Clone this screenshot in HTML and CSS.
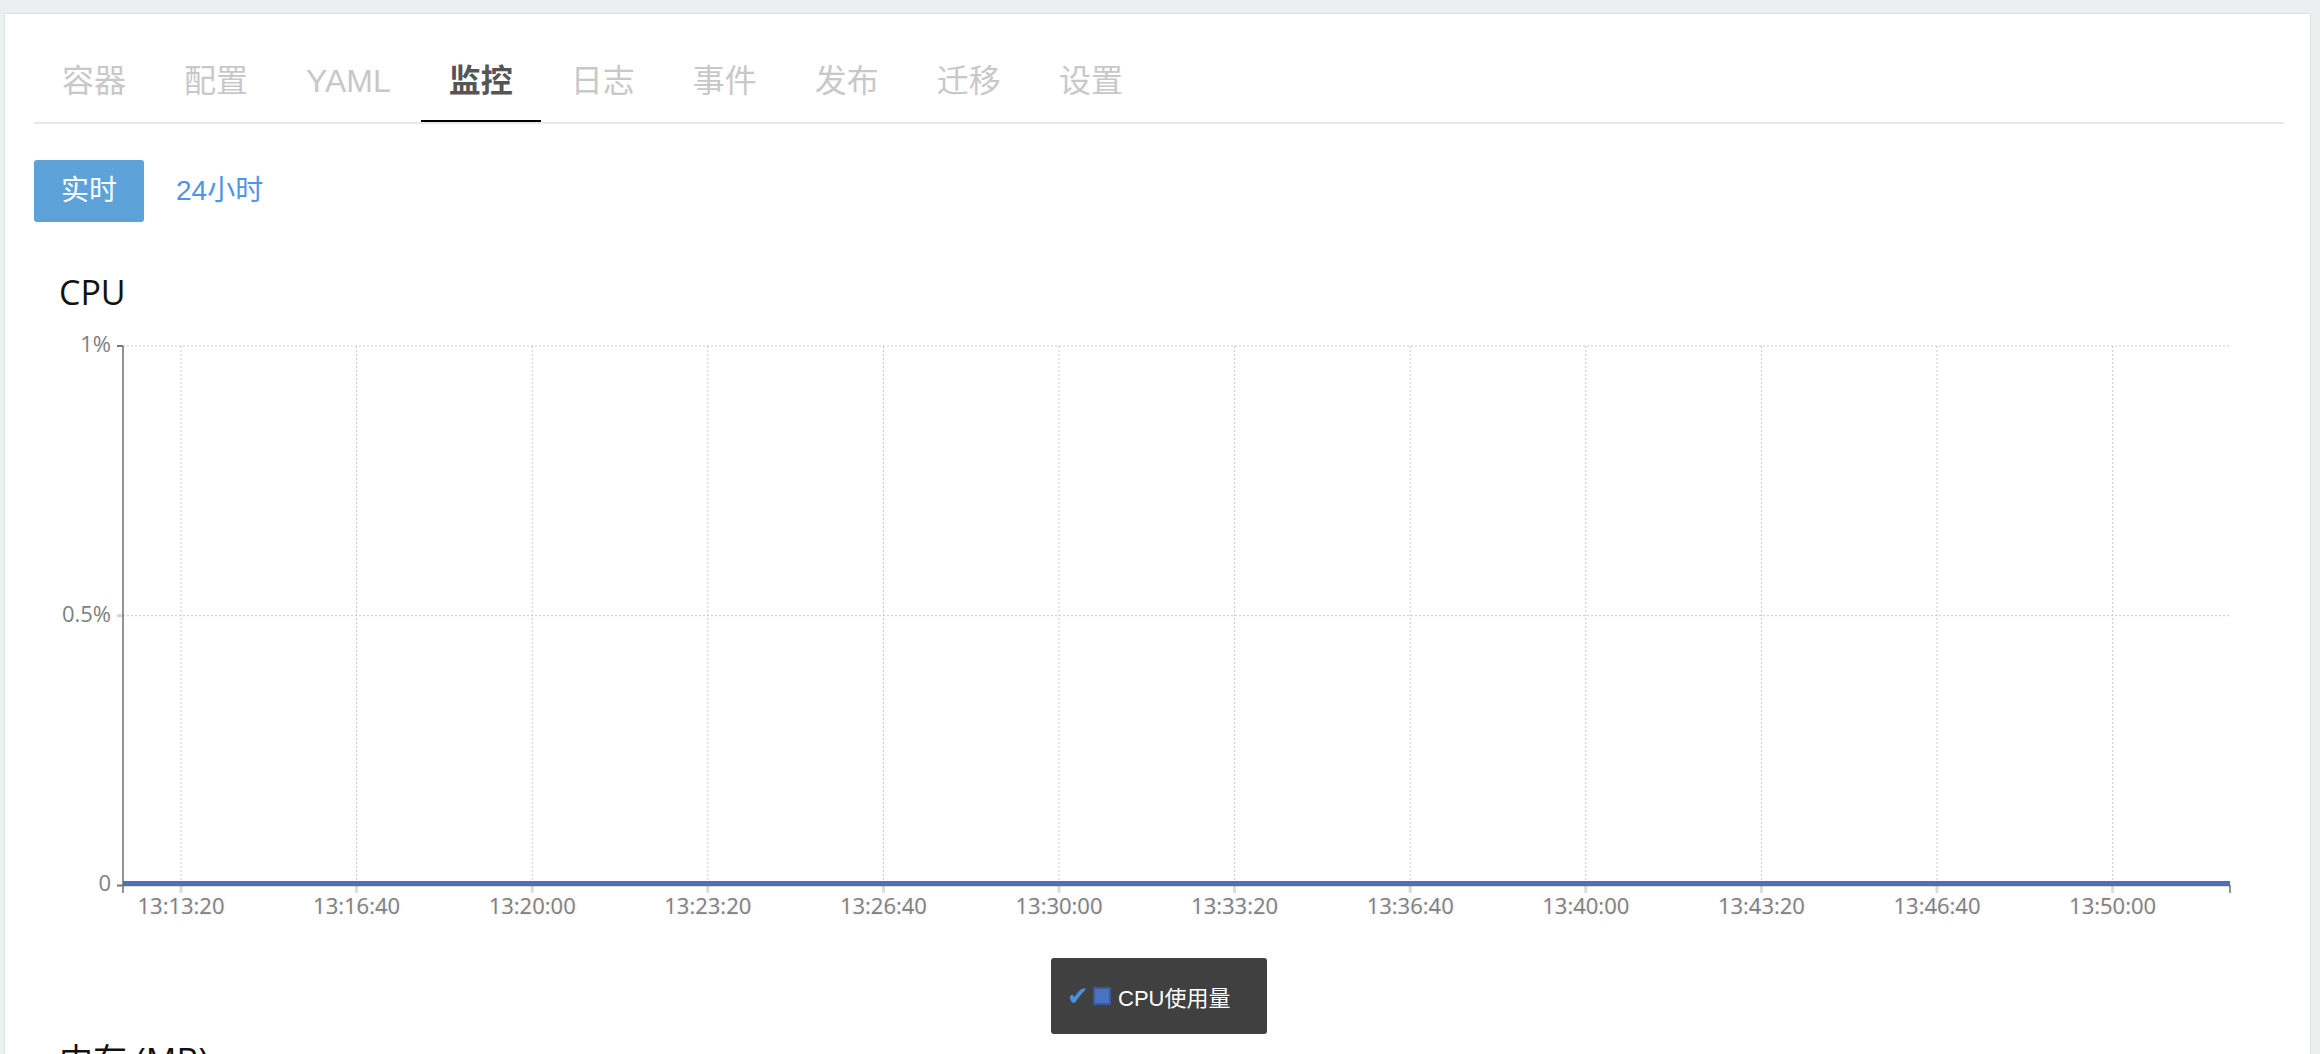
FILE: index.html
```html
<!DOCTYPE html>
<html lang="zh-CN">
<head>
<meta charset="utf-8">
<title>监控</title>
<link rel="stylesheet" href="styles.css">
</head>
<body>
<div class="page">
  <div class="card">
    <nav class="tabs">
      <a class="tab">容器</a>
      <a class="tab">配置</a>
      <a class="tab">YAML</a>
      <a class="tab active">监控</a>
      <a class="tab">日志</a>
      <a class="tab">事件</a>
      <a class="tab">发布</a>
      <a class="tab">迁移</a>
      <a class="tab">设置</a>
    </nav>

    <div class="toolbar">
      <button class="btn-primary">实时</button>
      <a class="btn-link">24小时</a>
    </div>

    <section class="metric">
      <h2 class="metric-title">CPU</h2>
      <svg class="chart" width="2250" height="620" viewBox="0 0 2250 620">
        <g class="grid">
          <line x1="89" y1="34" x2="2196" y2="34"/>
          <line x1="89" y1="303.7" x2="2196" y2="303.7"/>
          <line x1="147" y1="34" x2="147" y2="573"/>
          <line x1="322.6" y1="34" x2="322.6" y2="573"/>
          <line x1="498.2" y1="34" x2="498.2" y2="573"/>
          <line x1="673.8" y1="34" x2="673.8" y2="573"/>
          <line x1="849.4" y1="34" x2="849.4" y2="573"/>
          <line x1="1025" y1="34" x2="1025" y2="573"/>
          <line x1="1200.6" y1="34" x2="1200.6" y2="573"/>
          <line x1="1376.2" y1="34" x2="1376.2" y2="573"/>
          <line x1="1551.8" y1="34" x2="1551.8" y2="573"/>
          <line x1="1727.4" y1="34" x2="1727.4" y2="573"/>
          <line x1="1903" y1="34" x2="1903" y2="573"/>
          <line x1="2078.6" y1="34" x2="2078.6" y2="573"/>
        </g>
        <g class="xticks">
          <line x1="147" y1="574" x2="147" y2="581"/>
          <line x1="322.6" y1="574" x2="322.6" y2="581"/>
          <line x1="498.2" y1="574" x2="498.2" y2="581"/>
          <line x1="673.8" y1="574" x2="673.8" y2="581"/>
          <line x1="849.4" y1="574" x2="849.4" y2="581"/>
          <line x1="1025" y1="574" x2="1025" y2="581"/>
          <line x1="1200.6" y1="574" x2="1200.6" y2="581"/>
          <line x1="1376.2" y1="574" x2="1376.2" y2="581"/>
          <line x1="1551.8" y1="574" x2="1551.8" y2="581"/>
          <line x1="1727.4" y1="574" x2="1727.4" y2="581"/>
          <line x1="1903" y1="574" x2="1903" y2="581"/>
          <line x1="2078.6" y1="574" x2="2078.6" y2="581"/>
        </g>
        <g class="yticks">
          <line x1="83" y1="34" x2="89" y2="34"/>
          <line class="ytick-light" x1="83" y1="303.7" x2="89" y2="303.7"/>
          <line x1="83" y1="573.5" x2="89" y2="573.5"/>
        </g>
        <line class="series" x1="89" y1="571" x2="2196" y2="571"/>
        <line class="axis" x1="89" y1="573.5" x2="2196" y2="573.5"/>
        <line class="axis" x1="89" y1="34" x2="89" y2="581"/>
        <line class="axis" x1="2196" y1="573" x2="2196" y2="581"/>
        <g class="ylabels">
          <text x="77" y="40">1%</text>
          <text x="77" y="310">0.5%</text>
          <text x="77" y="579">0</text>
        </g>
        <g class="xlabels">
          <text x="147" y="602">13:13:20</text>
          <text x="322.6" y="602">13:16:40</text>
          <text x="498.2" y="602">13:20:00</text>
          <text x="673.8" y="602">13:23:20</text>
          <text x="849.4" y="602">13:26:40</text>
          <text x="1025" y="602">13:30:00</text>
          <text x="1200.6" y="602">13:33:20</text>
          <text x="1376.2" y="602">13:36:40</text>
          <text x="1551.8" y="602">13:40:00</text>
          <text x="1727.4" y="602">13:43:20</text>
          <text x="1903" y="602">13:46:40</text>
          <text x="2078.6" y="602">13:50:00</text>
        </g>
      </svg>
      <div class="legend-row">
        <div class="legend">
          <span class="legend-check">✔</span>
          <span class="legend-swatch"></span>
          <span class="legend-label">CPU使用量</span>
        </div>
      </div>
    </section>

    <section class="metric metric-next">
      <h2 class="metric-title">内存 (MB)</h2>
      <div class="chart-placeholder"></div>
    </section>
  </div>
</div>
</body>
</html>
```

FILE: styles.css
```css
html, body {
  margin: 0;
  padding: 0;
  overflow: hidden;
  background: #ebeff0;
}

body {
  font-family: "Liberation Sans", "Noto Sans CJK SC", sans-serif;
  color: #333;
}

.page {
  padding: 13px 9px 0 4px;
}

.card {
  background: #fff;
  border: 1px solid #dfe2e3;
  border-bottom: none;
  padding: 28px 26px 0 29px;
  min-height: 1200px;
}

/* Tabs */
.tabs {
  display: flex;
  gap: 2px;
  border-bottom: 2px solid #e8e8ec;
}

.tab {
  display: block;
  padding: 0 28px;
  font-size: 32px;
  line-height: 78px;
  color: #c8c8c8;
  border-bottom: 2px solid transparent;
  cursor: pointer;
}

.tab.active {
  color: #555;
  font-weight: 700;
  border-bottom-color: #000;
}

/* Toolbar */
.toolbar {
  display: flex;
  align-items: center;
  margin-top: 36px;
}

.btn-primary {
  height: 62px;
  padding: 0 27px;
  border: none;
  border-radius: 3px;
  background: #5ea2da;
  color: #fff;
  font-family: "Liberation Sans", "Noto Sans CJK SC", sans-serif;
  font-size: 28px;
  line-height: 62px;
}

.btn-link {
  margin-left: 32px;
  font-size: 28px;
  line-height: 62px;
  color: #4f94e6;
  cursor: pointer;
}

/* Metric sections */
.metric-title {
  margin: 50px 0 0 25px;
  font-family: "Open Sans", "Noto Sans CJK SC", sans-serif;
  font-weight: 400;
  font-size: 34px;
  line-height: 40px;
  color: #111;
}

.metric-next .metric-title {
  margin-top: 6px;
}

.chart {
  display: block;
}

.grid line {
  stroke: #c9c9c9;
  stroke-width: 1;
  stroke-dasharray: 2 2;
}

.xticks line {
  stroke: #dcdcdc;
  stroke-width: 3;
}

.yticks line {
  stroke: #777;
  stroke-width: 2;
}

.yticks .ytick-light {
  stroke: #d4d4d4;
  stroke-width: 3;
}

.series {
  stroke: #4a70c0;
  stroke-width: 4;
}

.axis {
  stroke: #6e6e6e;
  stroke-width: 1.5;
}

.ylabels text,
.xlabels text {
  font-family: "Open Sans", sans-serif;
  font-size: 22px;
  fill: #808080;
}

.ylabels text {
  text-anchor: end;
}

.xlabels text {
  text-anchor: middle;
  text-shadow: 0 0 3px rgba(0, 0, 0, 0.12);
}

/* Legend */
.legend-row {
  display: flex;
  justify-content: center;
  margin-top: 26px;
}

.legend {
  display: flex;
  align-items: center;
  box-sizing: border-box;
  width: 216px;
  height: 76px;
  padding: 0 16px;
  background: #404040;
  border-radius: 3px;
}

.legend-check {
  font-family: "DejaVu Sans", sans-serif;
  font-size: 26px;
  line-height: 1;
  color: #4a90e2;
  width: 24px;
}

.legend-swatch {
  box-sizing: border-box;
  width: 18px;
  height: 18px;
  margin-left: 2px;
  background: #4a72c4;
  border: 2px solid #3a5c9e;
  border-radius: 1px;
}

.legend-label {
  margin-left: 7px;
  font-family: "Liberation Sans", "Noto Sans CJK SC", sans-serif;
  font-size: 22px;
  color: #fff;
}

.chart-placeholder {
  height: 600px;
}
```
